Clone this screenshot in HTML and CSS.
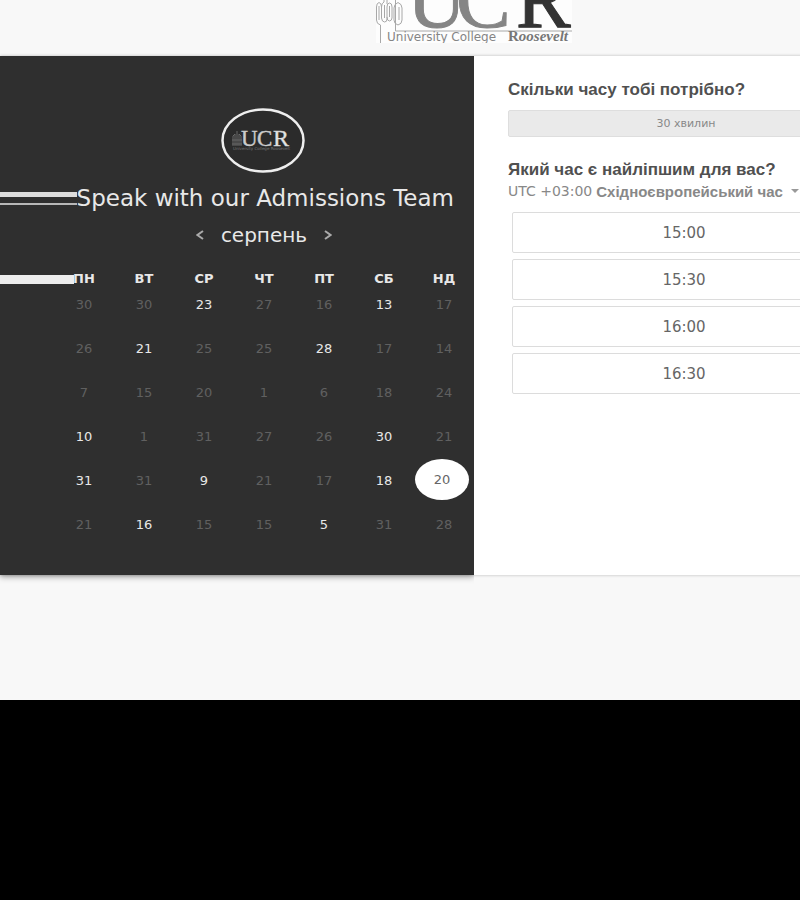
FILE: index.html
```html
<!DOCTYPE html>
<html lang="uk">
<head>
<meta charset="utf-8">
<meta name="viewport" content="width=device-width, initial-scale=1">
<title>Speak with our Admissions Team</title>
<link rel="stylesheet" href="styles.css">
</head>
<body>
<div class="page">
  <header class="brand">
    <svg class="brand-logo" viewBox="0 0 196 43" role="img" aria-label="University College Roosevelt">
      <rect width="196" height="43" fill="#fdfdfd"/>
      <g fill="none" stroke="#a8a8a8">
        <path d="M4.500 43V25Q.5 24 .5 20V7Q.5 3 3 2.500Q5.500 3 5.500 7V18Q6 22 8.500 22Q11 22 11 19V7Q11 3 13.500 3Q16 3 16 7V18Q15.500 21 13.500 21Q11 21 11 17"/>
        <path d="M3 6V20M5.500 7Q5.500 3 8 2V0M8.500 5V18M13.500 6V17M11 4V0"/>
        <path d="M19.500 0V31H196M22 25Q18 24 18 20V8Q18 4 22 2.500Q26 4 26 8V20Q26 24 22 25M23 7V20"/>
      </g>
      <g class="logo-serif" font-size="82">
        <text x="31" y="27" fill="#858585" stroke="#858585">U</text>
        <text x="80" y="27" fill="#858585" stroke="#858585">C</text>
        <text x="140" y="27" fill="#333" stroke="#333">R</text>
      </g>
      <text class="logo-sans" x="11" y="41" font-size="12" fill="#858585">University College</text>
      <text class="logo-serif" x="132" y="41" font-size="15" font-weight="bold" fill="#777">R<tspan font-style="italic">oosevelt</tspan></text>
    </svg>
  </header>

  <main class="scheduler">
    <section class="calendar">
      <svg class="emblem" viewBox="0 0 84 65" role="img" aria-label="UCR">
        <ellipse cx="42" cy="32.500" rx="40.500" ry="31" fill="#2b2b2b" stroke="#eee" stroke-width="2.500"/>
        <path d="M12 38V28L14 26V38M16 38V23M18 38V26L20 28V38M11 32H21M11 36H21" fill="none" stroke="#696969"/>
        <g class="logo-serif" font-size="23" fill="#ccc" stroke="#ccc" stroke-width=".4">
          <text x="20" y="38">U</text><text x="36" y="38">C</text><text x="52" y="38" fill="#e5e5e5" font-size="24">R</text>
        </g>
        <text class="logo-sans" x="12" y="42" font-size="4" fill="#777">University College Roosevelt</text>
      </svg>

      <div class="title-row">
        <span class="rules"></span>
        <h1>Speak with our Admissions Team</h1>
      </div>

      <div class="month">
        <button type="button" aria-label="Попередній місяць"><svg viewBox="0 0 8 10"><path d="M7 1L1.500 5L7 9"/></svg></button>
        <h2>серпень</h2>
        <button type="button" aria-label="Наступний місяць"><svg viewBox="0 0 8 10"><path d="M1 1L6.500 5L1 9"/></svg></button>
      </div>

      <div class="table-row">
        <span class="band"></span>
        <table class="dates">
          <thead><tr><th>ПН</th><th>ВТ</th><th>СР</th><th>ЧТ</th><th>ПТ</th><th>СБ</th><th>НД</th></tr></thead>
          <tbody>
            <tr><td>30</td><td>30</td><td><button type="button">23</button></td><td>27</td><td>16</td><td><button type="button">13</button></td><td>17</td></tr>
            <tr><td>26</td><td><button type="button">21</button></td><td>25</td><td>25</td><td><button type="button">28</button></td><td>17</td><td>14</td></tr>
            <tr><td>7</td><td>15</td><td>20</td><td>1</td><td>6</td><td>18</td><td>24</td></tr>
            <tr><td><button type="button">10</button></td><td>1</td><td>31</td><td>27</td><td>26</td><td><button type="button">30</button></td><td>21</td></tr>
            <tr><td><button type="button">31</button></td><td>31</td><td><button type="button">9</button></td><td>21</td><td>17</td><td><button type="button">18</button></td><td><button type="button" class="selected" aria-pressed="true">20</button></td></tr>
            <tr><td>21</td><td><button type="button">16</button></td><td>15</td><td>15</td><td><button type="button">5</button></td><td>31</td><td>28</td></tr>
          </tbody>
        </table>
      </div>
    </section>

    <section class="options">
      <h3>Скільки часу тобі потрібно?</h3>
      <button type="button" class="duration">30 хвилин</button>
      <h3>Який час є найліпшим для вас?</h3>
      <button type="button" class="zone"><span>UTC +03:00</span> <b>Східноєвропейський час</b><i class="caret"></i></button>
      <div class="slots">
        <button type="button">15:00</button>
        <button type="button">15:30</button>
        <button type="button">16:00</button>
        <button type="button">16:30</button>
      </div>
    </section>
  </main>
</div>
</body>
</html>
```
FILE: styles.css
```css
* {
  box-sizing: border-box;
}

html {
  background: #000;
}

body {
  margin: 0;
  overflow-x: hidden;
  font-family: "DejaVu Sans", sans-serif;
}

h1, h2, h3 {
  margin: 0;
}

button {
  margin: 0;
  padding: 0;
  border: 0;
  background: none;
  color: inherit;
  font: inherit;
  cursor: pointer;
}

/* The booking page is wider than the window and runs off its right edge. */
.page {
  width: 118.5%;
  padding-bottom: 125px;
  background: #f8f8f8;
}

.brand {
  display: flex;
  justify-content: center;
  padding-bottom: 13px;
}

.brand-logo {
  width: 196px;
  height: 43px;
}

.logo-serif {
  font-family: "Liberation Serif", serif;
}

.logo-sans {
  font-family: "DejaVu Sans", sans-serif;
}

.scheduler {
  display: grid;
  grid-template-columns: 1fr 1fr;
  background: #fff;
  box-shadow: 0 0 3px rgba(0, 0, 0, 0.25);
}

.calendar {
  display: flex;
  flex-direction: column;
  padding: 52px 0 17px;
  background: #2f2f2f;
  color: #e8e8e8;
  box-shadow: 0 2px 6px rgba(0, 0, 0, 0.35);
  clip-path: inset(0 0 -12px 0);
}

.emblem {
  width: 84px;
  height: 65px;
  align-self: flex-end;
  margin-right: 169px;
}

.title-row {
  display: flex;
  align-items: center;
  margin-top: 10px;
  padding-right: 20px;
}

.rules {
  flex: 1;
  height: 13px;
  border-top: 5px solid #dcdcdc;
  border-bottom: 2px solid #b8b8b8;
}

h1 {
  font-size: 23px;
  font-weight: 400;
  line-height: 30px;
  white-space: nowrap;
}

.month {
  display: flex;
  align-items: center;
  align-self: flex-end;
  justify-content: center;
  gap: 17px;
  width: 420px;
  margin-top: 7px;
}

.month h2 {
  font-size: 20px;
  font-weight: 400;
  line-height: 30px;
}

.month svg {
  display: block;
  width: 8px;
  height: 10px;
  fill: none;
  stroke: #aaa;
  stroke-width: 2;
}

.table-row {
  display: flex;
  margin-top: 18px;
}

.band {
  flex: 1;
  height: 9px;
  margin: 7px -20px 0 0;
  background: #ededed;
}

.dates {
  width: 420px;
  table-layout: fixed;
  border-collapse: collapse;
  font-size: 13px;
  line-height: 22px;
  text-align: center;
}

.dates th {
  height: 26px;
  padding: 0 0 4px;
  font-weight: 700;
}

.dates td {
  height: 44px;
  padding: 0;
  color: #606060;
  vertical-align: top;
}

.dates button {
  display: block;
  width: 100%;
  color: #e8e8e8;
}

.dates .selected {
  width: 54px;
  height: 41px;
  margin: -11px auto 0 1px;
  border-radius: 50%;
  background: #fff;
  color: #666;
}

.options {
  padding: 24px 84px 0 34px;
}

h3 {
  color: #505050;
  font-family: "Liberation Sans", sans-serif;
  font-size: 17px;
  font-weight: 700;
  line-height: 20px;
}

.duration {
  display: block;
  width: 100%;
  height: 27px;
  margin: 10px 0 23px;
  border: 1px solid #dedede;
  border-radius: 2px;
  background: #eaeaea;
  color: #888;
  font-size: 11px;
}

.zone {
  display: flex;
  align-items: center;
  gap: 4px;
  height: 22px;
  color: #888;
  font-size: 14px;
  white-space: nowrap;
}

.zone b {
  font-family: "Liberation Sans", sans-serif;
  font-size: 15px;
}

.caret {
  margin-left: 4px;
  border: 4px solid transparent;
  border-top-color: #999;
  border-bottom-width: 0;
}

.slots {
  display: grid;
  gap: 6px;
  margin: 10px 8px 0 4px;
}

.slots button {
  height: 41px;
  border: 1px solid #dcdcdc;
  border-radius: 2px;
  background: #fff;
  color: #666;
  font-size: 15px;
}
```
